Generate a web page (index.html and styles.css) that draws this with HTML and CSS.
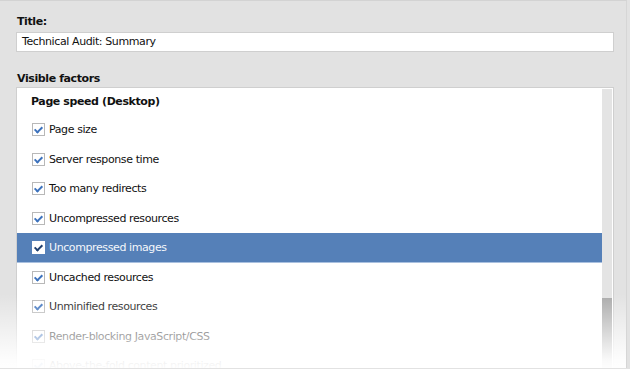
FILE: index.html
```html
<!DOCTYPE html>
<html lang="en">
<head>
    <meta charset="UTF-8">
    <title>Report settings</title>
    <link rel="stylesheet" href="styles.css">
</head>
<body>
    <div class="panel">
        <label class="field-label">Title:</label>
        <div class="text-input">Technical Audit: Summary</div>

        <label class="field-label factors-label">Visible factors</label>
        <div class="list-box">
            <div class="list-items">
                <div class="group-title">Page speed (Desktop)</div>
                <div class="item"><span class="check"></span>Page size</div>
                <div class="item"><span class="check"></span>Server response time</div>
                <div class="item"><span class="check"></span>Too many redirects</div>
                <div class="item"><span class="check"></span>Uncompressed resources</div>
                <div class="item selected"><span class="check"></span>Uncompressed images</div>
                <div class="item"><span class="check"></span>Uncached resources</div>
                <div class="item"><span class="check"></span>Unminified resources</div>
                <div class="item"><span class="check"></span>Render-blocking JavaScript/CSS</div>
                <div class="item"><span class="check"></span>Above-the-fold content prioritized</div>
            </div>
            <div class="scrollbar">
                <div class="thumb"></div>
            </div>
        </div>
        <div class="fade"></div>
    </div>
</body>
</html>
```

FILE: styles.css
```css
body {
    margin: 0;
    background-color: #e2e2e2;
    font-family: 'DejaVu Sans', 'Liberation Sans', sans-serif;
    font-size: 11px;
    letter-spacing: -0.4px;
    color: #111;
    overflow: hidden;
}

.panel {
    position: relative;
    width: 627px;
    height: 368px;
    border-top: 1px solid #d3d3d3;
    border-right: 1px solid #d6d6d6;
    padding: 0 12px 0 16px;
    box-sizing: border-box;
    overflow: hidden;
}

.field-label {
    display: block;
    font-weight: bold;
    padding: 14px 0 0 1px;
    height: 17px;
}

.factors-label {
    padding-top: 20px;
    height: 15px;
}

.text-input {
    background: #fff;
    border: 1px solid #cfcfcf;
    height: 18px;
    line-height: 18px;
    padding-left: 5px;
}

.list-box {
    display: flex;
    background: #fff;
    border: 1px solid #cfcfcf;
    height: 300px;
}

.list-items {
    flex: 1;
}

.group-title {
    font-weight: bold;
    padding-left: 14px;
    height: 27px;
    line-height: 27px;
}

.item {
    display: flex;
    align-items: center;
    height: 29.5px;
    padding-left: 15px;
    box-sizing: border-box;
}

.item.selected {
    background: #5580b8;
    color: #f4f7fb;
    border-bottom: 1px solid #a9c0df;
}

.check {
    width: 11px;
    height: 11px;
    border: 1px solid #b8b8b8;
    background: #fff;
    margin-right: 4px;
    position: relative;
}

.check::after {
    content: "";
    position: absolute;
    left: 3px;
    top: 1px;
    width: 3px;
    height: 6px;
    border-right: 2px solid #3c72bd;
    border-bottom: 2px solid #3c72bd;
    transform: rotate(45deg);
}

.selected .check {
    border-color: #fff;
}

.selected .check::after {
    border-color: #1f3f6e;
}

.scrollbar {
    width: 10px;
    margin: 1px 1px 0 0;
    background: #e4e4e4;
    display: flex;
    flex-direction: column;
    justify-content: flex-end;
}

.thumb {
    height: 90px;
    background: #aaaaaa;
}

.fade {
    position: absolute;
    left: 0;
    right: 0;
    bottom: 0;
    height: 74px;
    background: linear-gradient(to bottom,
        rgba(255, 255, 255, 0) 0%,
        rgba(255, 255, 255, 0.55) 52%,
        rgba(255, 255, 255, 0.92) 88%,
        rgba(255, 255, 255, 0.98) 100%);
}
```
